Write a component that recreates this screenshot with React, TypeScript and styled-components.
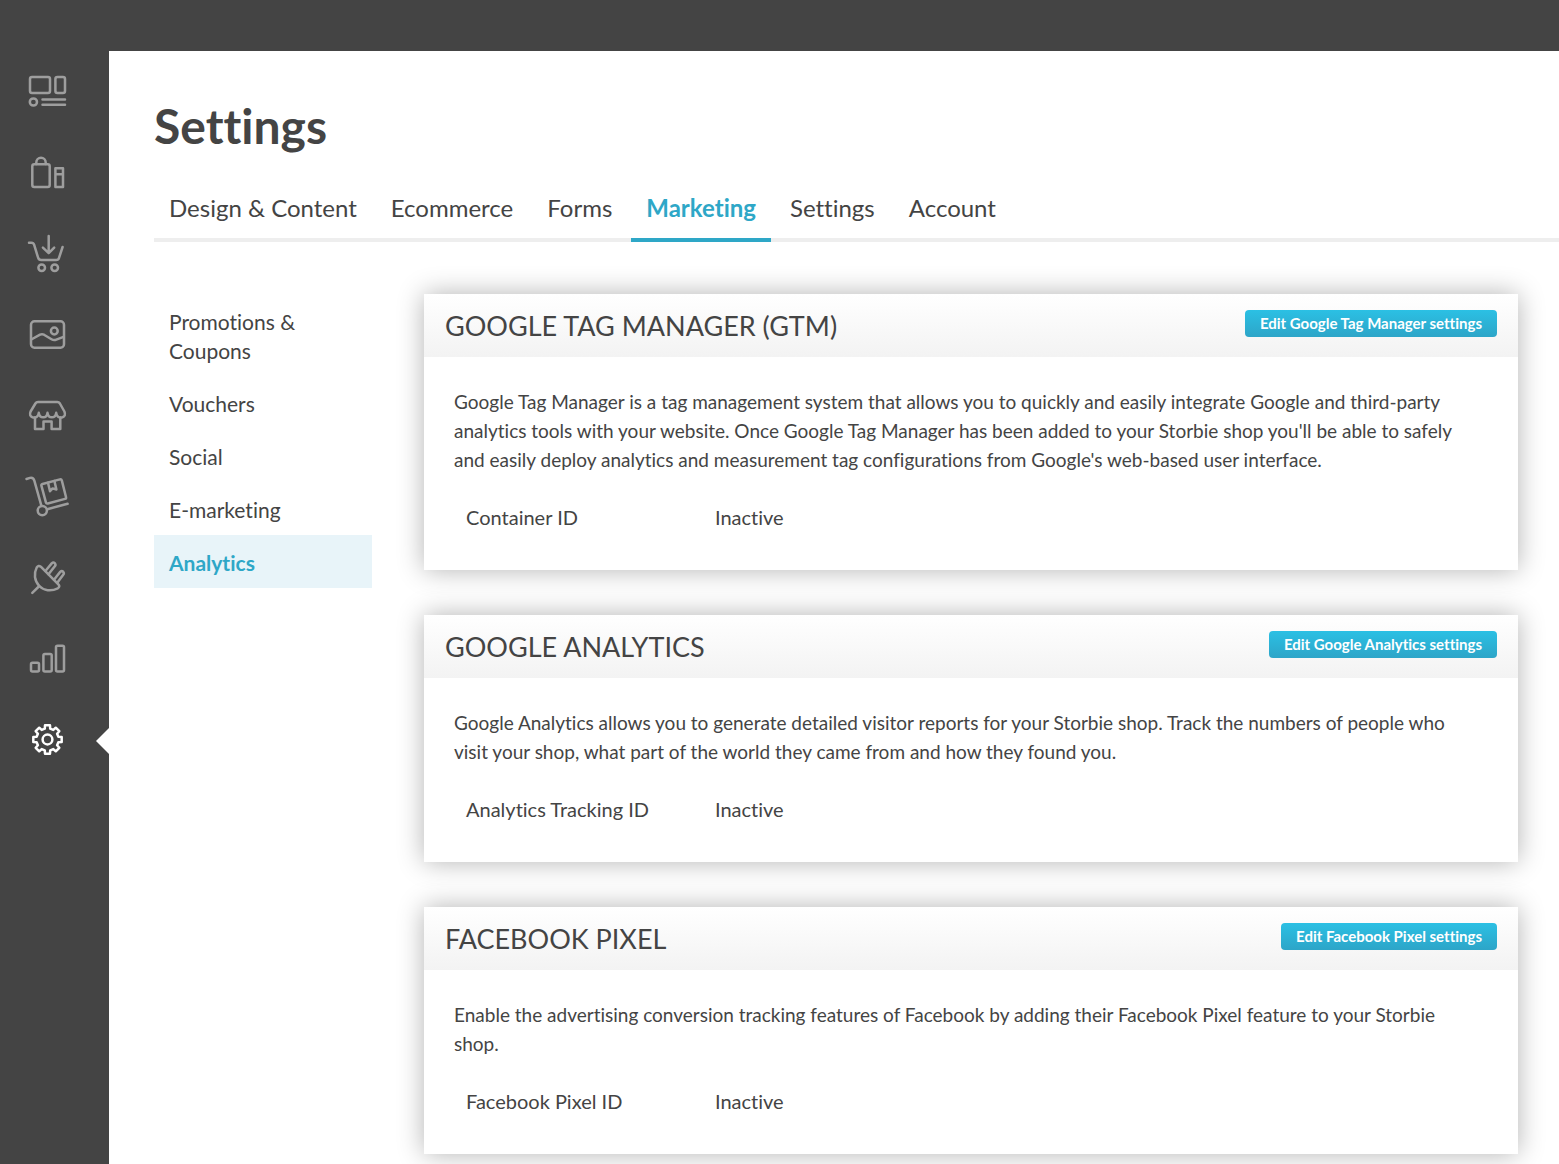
import React from "react";
import styled, { createGlobalStyle, css } from "styled-components";

const GlobalStyle = createGlobalStyle`
  *, *::before, *::after { box-sizing: border-box; }
  body {
    margin: 0;
    background: #fff;
    color: #444;
    font-family: Lato, "Open Sans", sans-serif;
    font-size: 20px;
    line-height: 29px;
    font-variant-ligatures: none;
  }
  h1, h2, p, dl, dd, ul { margin: 0; padding: 0; font-weight: 400; }
  ul { list-style: none; }
  a { color: inherit; text-decoration: none; }
`;

const Page = styled.div`
  display: grid;
  grid-template-columns: 109px minmax(0, 1fr);
  grid-template-rows: 51px 1fr;
  min-height: 100vh;
`;

const TopBar = styled.header`
  grid-column: 1 / -1;
  background: #444;
`;

const Sidebar = styled.nav`
  background: #444;
`;

const SidebarLink = styled.a<{ $active?: boolean }>`
  position: relative;
  display: block;
  height: 81px;
  padding: 16px 0 0 23px;
  color: ${(p) => (p.$active ? "#fff" : "#9e9e9e")};

  ${(p) =>
    p.$active &&
    css`
      &::after {
        content: "";
        position: absolute;
        top: 29px;
        right: 0;
        border: solid transparent;
        border-width: 13px 13px 13px 0;
        border-right-color: #fff;
      }
    `}
`;

const Glyph = styled.svg`
  display: block;
  width: 48px;
  height: 48px;
  fill: none;
  stroke: currentColor;
  stroke-width: 2.5;
  stroke-linecap: round;
  stroke-linejoin: round;
`;

const Main = styled.main`
  padding: 45px 0 10px 45px;
`;

const Title = styled.h1`
  font-size: 48px;
  line-height: 60px;
  font-weight: 700;
`;

const Tabs = styled.nav`
  display: flex;
  gap: 4px;
  margin-top: 22px;
  box-shadow: inset 0 -4px #eee;
`;

const Tab = styled.a<{ $active?: boolean }>`
  padding: 15px;
  border-bottom: 4px solid ${(p) => (p.$active ? "#2ea7c7" : "transparent")};
  color: ${(p) => (p.$active ? "#2ea7c7" : "inherit")};
  font-size: 24px;
  line-height: 30px;
  font-weight: ${(p) => (p.$active ? 700 : 400)};
  white-space: nowrap;
`;

const Columns = styled.div`
  display: grid;
  grid-template-columns: 218px minmax(0, 1fr);
  gap: 52px;
  padding: 52px 41px 0 0;
`;

const SubLink = styled.a<{ $active?: boolean }>`
  display: block;
  padding: 13px 15px 11px;
  background: ${(p) => (p.$active ? "#e8f4f9" : "transparent")};
  color: ${(p) => (p.$active ? "#2ea7c7" : "inherit")};
  font-size: 21px;
  font-weight: ${(p) => (p.$active ? 700 : 400)};
`;

const Cards = styled.div`
  display: flex;
  flex-direction: column;
  gap: 45px;
`;

const Card = styled.section`
  background: #fff;
  box-shadow: 0 0 25px rgba(0, 0, 0, 0.3);
`;

const CardHeader = styled.header`
  display: flex;
  align-items: flex-start;
  justify-content: space-between;
  height: 63px;
  padding: 16px 21px 0;
  background: linear-gradient(#fff, #f3f3f3);
`;

const CardTitle = styled.h2`
  font-size: 27px;
  line-height: 32px;
  text-transform: uppercase;
`;

const EditButton = styled.button`
  height: 27px;
  padding: 0 15px;
  border: 0;
  border-radius: 4px;
  background: linear-gradient(#2bc0e4, #2da5c8);
  color: #fff;
  font: 700 15px/27px Lato, "Open Sans", sans-serif;
  font-variant-ligatures: none;
  cursor: pointer;
`;

const CardBody = styled.div`
  padding: 30px 45px 38px 30px;
`;

const Description = styled.p`
  font-size: 19px;
`;

const Details = styled.dl`
  display: grid;
  grid-template-columns: 249px 1fr;
  padding: 29px 12px 0;
`;

/* Outline of an eight-toothed cog centred in the 48px icon box. */
const cogPath = (() => {
  const points: string[] = [];
  const at = (deg: number, r: number) => {
    const a = (deg * Math.PI) / 180;
    return `${(24.5 + r * Math.cos(a)).toFixed(2)} ${(24.5 + r * Math.sin(a)).toFixed(2)}`;
  };
  for (let i = 0; i < 8; i++) {
    const d = i * 45;
    points.push(at(d - 14, 11.2), at(d - 10, 14.4), at(d + 10, 14.4), at(d + 14, 11.2));
  }
  return `M${points.join("L")}Z`;
})();

const sections: { label: string; icon: React.ReactNode; active?: boolean }[] = [
  {
    label: "Design and content",
    icon: (
      <>
        <rect x="7" y="10" width="20" height="16" rx="2" />
        <rect x="32.4" y="10" width="9.6" height="16" rx="2" />
        <circle cx="10.4" cy="35" r="3.6" />
        <path d="M19.5 32.4H42M19.5 37.8H42" />
      </>
    ),
  },
  {
    label: "Products",
    icon: (
      <>
        <rect x="9.3" y="16.3" width="17.4" height="22.7" rx="2" />
        <path d="M13.3 16v-1.6a4.7 4.7 0 0 1 9.4 0V16" />
        <path d="M32.4 20.3H40V39H32.4ZM32.4 26.3H40" />
      </>
    ),
  },
  {
    label: "Orders",
    icon: (
      <>
        <path d="M6 13.7h2.5q2 0 2.6 2l4 13q.7 2.3 3 2.3h15q2.4 0 3-2.3L39.6 18" />
        <path d="M25.7 7V24M19.9 18.6L25.7 24.2L31.2 18.6" />
        <circle cx="18.7" cy="38.7" r="3.3" />
        <circle cx="31.7" cy="38.7" r="3.3" />
      </>
    ),
  },
  {
    label: "Media",
    icon: (
      <>
        <rect x="8" y="11.3" width="33" height="26.4" rx="3.5" />
        <circle cx="31.3" cy="21" r="3.4" />
        <path d="M8.3 29.5L17 24.7q2-1 4 0L28.5 29.3q2.3 1.4 4.8.4L40.5 26.8" />
      </>
    ),
  },
  {
    label: "Shop",
    icon: (
      <>
        <path d="M15 11H34.3q1.700 0 2.6 1.5L41.4 20.5q1.800 4.500-1.900 5.700c-3.600 1-6-1-6.300-4.400c-.4 3.200-1.900 4.500-4.400 4.500s-3.900-1.300-4.300-4.500c-.4 3.200-1.900 4.500-4.300 4.500s-4-1.300-4.400-4.500c-.3 3.400-2.700 5.400-6.300 4.400q-3.700-1.200-1.900-5.700L12.400 12.500q.9-1.500 2.600-1.500Z" />
        <path d="M12 26.5V38H20.5V30.5H28.6V38H37.3V26.5" />
      </>
    ),
  },
  {
    label: "Suppliers",
    icon: (
      <>
        <path d="M3.500 7L7 5.900q3.400-.7 4.400 3L18.400 33.800" />
        <circle cx="19.3" cy="38.6" r="4.6" />
        <path d="M24.2 37.200L44.600 31.800" />
        <path d="M19.500 12L36.900 7.400q1.500-.3 1.900 1L43 25q.4 1.500-1 1.900L24.800 31.500q-1.500.4-1.900-1.100L18.400 13.700q-.4-1.300 1.100-1.700Z" />
        <path d="M25 10.700L27 19.200L29.600 16.400L33.400 17.500L31.400 9" />
      </>
    ),
  },
  {
    label: "Integrations",
    icon: (
      <>
        <path d="M9.3 39.8L16.3 33" />
        <path d="M17.800 13.700L35.600 31.600q1.700 2.100-.8 3.700C28 38.700 20.700 37.600 16.300 33C11.400 28 10.600 20.500 13.700 14.500q1.700-2.500 4.100-.8Z" />
        <path d="M22.400 18L28.700 10.400q1.600-1.600 3.100-.2q1.400 1.600 0 3.100L25.500 21.300M31 26.700L37.200 18.900q1.500-1.500 3-.2q1.300 1.500 0 3L34.300 29.700" />
      </>
    ),
  },
  {
    label: "Reports",
    icon: (
      <>
        <rect x="8" y="28.7" width="8" height="8.7" rx="1.5" />
        <rect x="20.4" y="20" width="8.3" height="17.4" rx="1.5" />
        <rect x="33" y="11.7" width="8" height="25.7" rx="1.5" />
      </>
    ),
  },
  {
    label: "Settings",
    active: true,
    icon: (
      <>
        <path d={cogPath} />
        <circle cx="24.5" cy="24.5" r="4.9" />
      </>
    ),
  },
];

const tabs = ["Design & Content", "Ecommerce", "Forms", "Marketing", "Settings", "Account"];

const subLinks = ["Promotions & Coupons", "Vouchers", "Social", "E-marketing", "Analytics"];

const services = [
  {
    title: "Google Tag Manager (GTM)",
    action: "Edit Google Tag Manager settings",
    text: "Google Tag Manager is a tag management system that allows you to quickly and easily integrate Google and third-party analytics tools with your website. Once Google Tag Manager has been added to your Storbie shop you'll be able to safely and easily deploy analytics and measurement tag configurations from Google's web-based user interface.",
    field: "Container ID",
  },
  {
    title: "Google Analytics",
    action: "Edit Google Analytics settings",
    text: "Google Analytics allows you to generate detailed visitor reports for your Storbie shop. Track the numbers of people who visit your shop, what part of the world they came from and how they found you.",
    field: "Analytics Tracking ID",
  },
  {
    title: "Facebook Pixel",
    action: "Edit Facebook Pixel settings",
    text: "Enable the advertising conversion tracking features of Facebook by adding their Facebook Pixel feature to your Storbie shop.",
    field: "Facebook Pixel ID",
  },
];

export default function App() {
  return (
    <Page>
      <GlobalStyle />
      <TopBar />
      <Sidebar aria-label="Main">
        {sections.map((s) => (
          <SidebarLink key={s.label} href="#" aria-label={s.label} $active={s.active}>
            <Glyph viewBox="0 0 48 48" aria-hidden="true">
              {s.icon}
            </Glyph>
          </SidebarLink>
        ))}
      </Sidebar>
      <Main>
        <Title>Settings</Title>
        <Tabs aria-label="Settings sections">
          {tabs.map((t) => (
            <Tab key={t} href="#" $active={t === "Marketing"}>
              {t}
            </Tab>
          ))}
        </Tabs>
        <Columns>
          <ul>
            {subLinks.map((l) => (
              <li key={l}>
                <SubLink href="#" $active={l === "Analytics"}>
                  {l}
                </SubLink>
              </li>
            ))}
          </ul>
          <Cards>
            {services.map((s) => (
              <Card key={s.title}>
                <CardHeader>
                  <CardTitle>{s.title}</CardTitle>
                  <EditButton type="button">{s.action}</EditButton>
                </CardHeader>
                <CardBody>
                  <Description>{s.text}</Description>
                  <Details>
                    <dt>{s.field}</dt>
                    <dd>Inactive</dd>
                  </Details>
                </CardBody>
              </Card>
            ))}
          </Cards>
        </Columns>
      </Main>
    </Page>
  );
}
